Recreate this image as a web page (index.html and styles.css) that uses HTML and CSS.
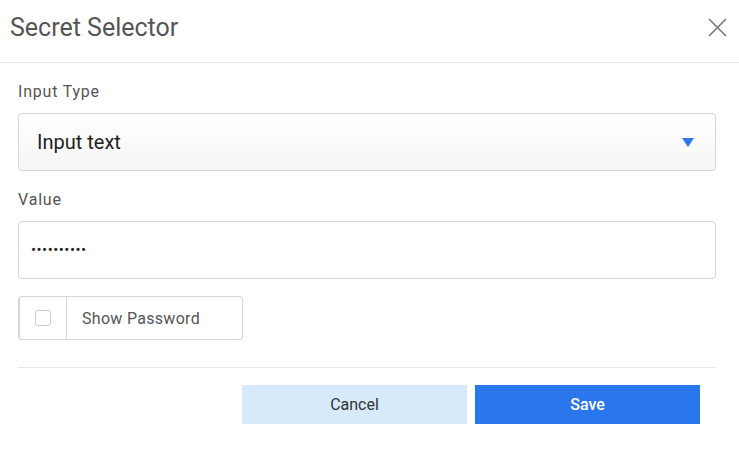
FILE: index.html
```html
<!DOCTYPE html>
<html lang="en">
<head>
<meta charset="utf-8">
<title>Secret Selector</title>
<link rel="stylesheet" href="styles.css">
</head>
<body>
<div class="dialog">
  <header class="dialog-header">
    <h1 class="dialog-title">Secret Selector</h1>
    <button class="close-btn" aria-label="Close">
      <svg width="19" height="19" viewBox="0 0 19 19"><path d="M1 1 L18 18 M18 1 L1 18" stroke="#777" stroke-width="1.6" fill="none"/></svg>
    </button>
  </header>
  <div class="dialog-body">
    <label class="field-label">Input Type</label>
    <div class="select-box">
      <span class="select-value">Input text</span>
      <svg class="caret" width="12" height="9" viewBox="0 0 12 9"><path d="M0 0 H12 L6 9 Z" fill="#2a78ea"/></svg>
    </div>
    <label class="field-label">Value</label>
    <input class="text-input" type="password" value="secretvalu">
    <div class="check-group">
      <span class="check-cell"><span class="check-box"></span></span>
      <span class="check-text">Show Password</span>
    </div>
    <div class="footer">
      <button class="btn btn-cancel">Cancel</button>
      <button class="btn btn-save">Save</button>
    </div>
  </div>
</div>
</body>
</html>
```
FILE: styles.css
```css
* { box-sizing: border-box; }
html, body { margin: 0; background: #fff; }
body { font-family: Roboto, "Liberation Sans", sans-serif; color: #555; }

.dialog { width: 739px; height: 455px; background: #fff; }

.dialog-header {
  height: 63px;
  display: flex;
  align-items: center;
  justify-content: space-between;
  padding: 0 12px 0 10px;
  border-bottom: 1px solid #e6e6e6;
}
.dialog-title {
  margin: 0;
  font-size: 25px;
  font-weight: 400;
  color: #555;
  padding-bottom: 8px;
}
.close-btn {
  border: 0;
  background: none;
  padding: 0;
  width: 19px;
  height: 19px;
  margin-bottom: 8px;
  display: flex;
}

.dialog-body {
  padding: 19px 23px 0 18px;
  display: flex;
  flex-direction: column;
}
.field-label {
  font-size: 16px;
  line-height: 20px;
  color: #555;
  letter-spacing: 0.8px;
  margin-bottom: 11px;
}
.select-box {
  height: 58px;
  border: 1px solid #d3d6da;
  border-radius: 4px;
  background: linear-gradient(#ffffff, #f6f6f6);
  display: flex;
  align-items: center;
  justify-content: space-between;
  padding: 0 21px 0 18px;
  margin-bottom: 19px;
}
.select-value { font-size: 20px; color: #222; }
.caret { display: block; margin-top: 1px; }

.text-input {
  height: 58px;
  border: 1px solid #d3d6da;
  border-radius: 4px;
  background: #fff;
  padding: 0 12px;
  font-family: Roboto, "Liberation Sans", sans-serif;
  font-size: 15px;
  letter-spacing: 0.5px;
  color: #222;
  outline: none;
  margin: 0 0 17px 0;
}

.check-group {
  width: 225px;
  height: 44px;
  border: 1px solid #d3d6da;
  border-left: 2px solid #d3d6da;
  border-radius: 4px;
  display: flex;
  align-items: stretch;
}
.check-cell {
  width: 47px;
  border-right: 1px solid #d3d6da;
  display: flex;
  align-items: center;
  justify-content: center;
}
.check-box {
  width: 16px;
  height: 16px;
  border: 1px solid #ccc;
  border-radius: 3px;
  background: #fff;
}
.check-text {
  display: flex;
  align-items: center;
  padding-left: 15px;
  font-size: 16px;
  letter-spacing: 0.3px;
  color: #555;
}

.footer {
  margin-top: 27px;
  border-top: 1px solid #e6e6e6;
  padding: 17px 16px 0 0;
  display: flex;
  justify-content: flex-end;
  gap: 8px;
}
.btn {
  width: 225px;
  height: 39px;
  border: 0;
  font-family: Roboto, "Liberation Sans", sans-serif;
  font-size: 16px;
}
.btn-cancel { background: #d6eafb; color: #333; }
.btn-save { background: #2a76ed; color: #fff; font-weight: 500; }
```
